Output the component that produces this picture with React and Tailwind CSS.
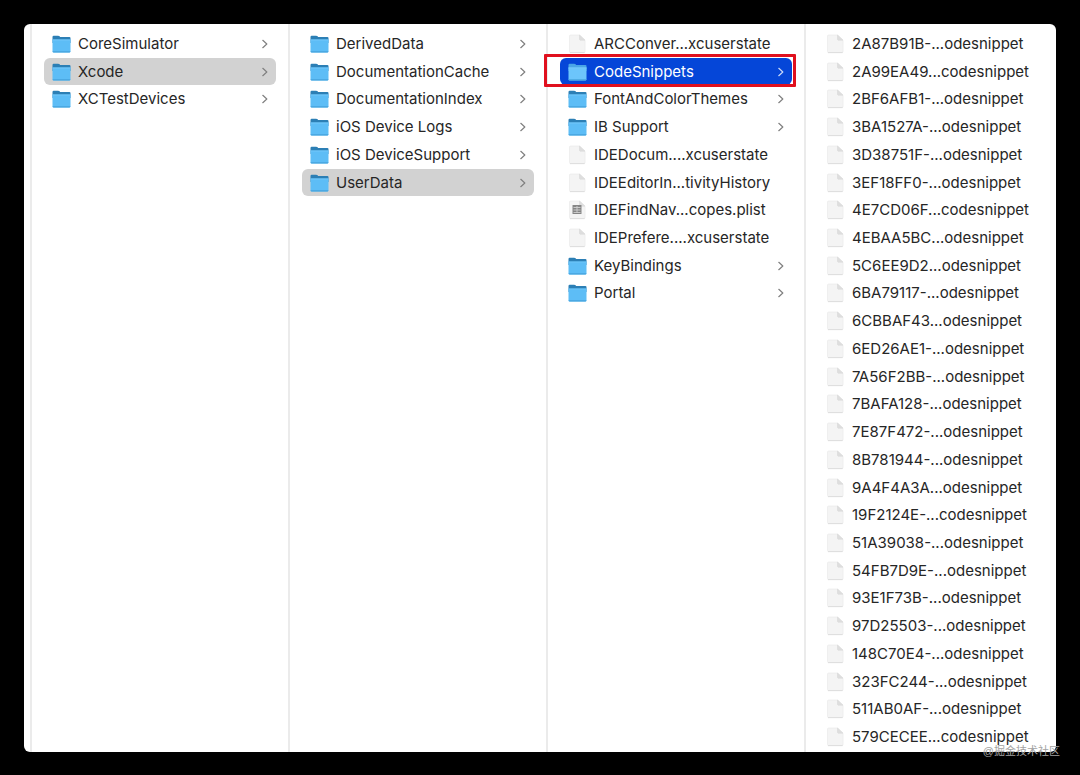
import React, { useState } from 'react';

const columns = [
  {
    name: 'Developer',
    items: [
      { name: 'CoreSimulator', type: 'folder' },
      { name: 'Xcode', type: 'folder' },
      { name: 'XCTestDevices', type: 'folder' },
    ],
  },
  {
    name: 'Xcode',
    items: [
      { name: 'DerivedData', type: 'folder' },
      { name: 'DocumentationCache', type: 'folder' },
      { name: 'DocumentationIndex', type: 'folder' },
      { name: 'iOS Device Logs', type: 'folder' },
      { name: 'iOS DeviceSupport', type: 'folder' },
      { name: 'UserData', type: 'folder' },
    ],
  },
  {
    name: 'UserData',
    items: [
      { name: 'ARCConver...xcuserstate', type: 'file' },
      { name: 'CodeSnippets', type: 'folder', marked: true },
      { name: 'FontAndColorThemes', type: 'folder' },
      { name: 'IB Support', type: 'folder' },
      { name: 'IDEDocum....xcuserstate', type: 'file' },
      { name: 'IDEEditorIn...tivityHistory', type: 'file' },
      { name: 'IDEFindNav...copes.plist', type: 'plist' },
      { name: 'IDEPrefere....xcuserstate', type: 'file' },
      { name: 'KeyBindings', type: 'folder' },
      { name: 'Portal', type: 'folder' },
    ],
  },
  {
    name: 'CodeSnippets',
    items: [
      '2A87B91B-...odesnippet',
      '2A99EA49...codesnippet',
      '2BF6AFB1-...odesnippet',
      '3BA1527A-...odesnippet',
      '3D38751F-...odesnippet',
      '3EF18FF0-...odesnippet',
      '4E7CD06F...codesnippet',
      '4EBAA5BC...odesnippet',
      '5C6EE9D2...odesnippet',
      '6BA79117-...odesnippet',
      '6CBBAF43...odesnippet',
      '6ED26AE1-...odesnippet',
      '7A56F2BB-...odesnippet',
      '7BAFA128-...odesnippet',
      '7E87F472-...odesnippet',
      '8B781944-...odesnippet',
      '9A4F4A3A...odesnippet',
      '19F2124E-...codesnippet',
      '51A39038-...odesnippet',
      '54FB7D9E-...odesnippet',
      '93E1F73B-...odesnippet',
      '97D25503-...odesnippet',
      '148C70E4-...odesnippet',
      '323FC244-...odesnippet',
      '511AB0AF-...odesnippet',
      '579CECEE...codesnippet',
    ].map((name) => ({ name, type: 'file' })),
  },
];

const FolderIcon = ({ light }) => (
  <svg viewBox="0 0 19 18" className="h-[18px] w-[19px] shrink-0" aria-hidden="true">
    <path
      d="M0.5 1.9Q0.5 0.7 1.7 0.7H6.2Q7 0.7 7.6 1.3L8.2 1.9H17.4Q18.5 1.9 18.5 3V8H0.5Z"
      fill={light ? '#4aa5e6' : '#2c7fb5'}
    />
    <path
      d="M0.5 4.6H18.5V16.2Q18.5 17.4 17.3 17.4H1.7Q0.5 17.4 0.5 16.2Z"
      fill={light ? '#6cc5fb' : '#5dbdf6'}
    />
    <path d="M0.5 4.6H18.5V5.4H0.5Z" fill="#74c8f9" />
    <path d="M0.6 16.2H18.4Q18.3 17.4 17.3 17.4H1.7Q0.7 17.4 0.6 16.2Z" fill="#46a3dc" />
  </svg>
);

const FileIcon = ({ plist }) => (
  <svg viewBox="0 0 19 20" className="h-5 w-[19px] shrink-0" aria-hidden="true">
    <path
      d="M1.5 2Q1.5 1 2.5 1H11.5L17 6.2V17.6Q17 18.6 16 18.6H2.5Q1.5 18.6 1.5 17.6Z"
      fill="#f4f4f4"
      stroke="#ececec"
      strokeWidth="0.8"
    />
    <path d="M2 18.6H16.6" stroke="#dadada" strokeWidth="0.9" />
    <path d="M11.5 1V5.2Q11.5 6.2 12.5 6.2H17Z" fill="#dedede" stroke="#d4d4d4" strokeWidth="0.5" />
    {plist && (
      <g>
        <rect x="4.5" y="5" width="9" height="9" rx="0.5" fill="#858585" />
        <path d="M5.5 7.5H12.5M5.5 10H12.5M5.5 12.5H12.5M9 6V13" stroke="#cfcfcf" strokeWidth="0.9" />
      </g>
    )}
  </svg>
);

const Chevron = ({ color }) => (
  <svg viewBox="0 0 6 10" className="ml-auto h-[10px] w-[6px] shrink-0" aria-hidden="true">
    <path
      d="M0.8 1.3L4.8 5L0.8 8.7"
      fill="none"
      stroke={color}
      strokeWidth="1.2"
      strokeLinecap="round"
      strokeLinejoin="round"
    />
  </svg>
);

const App = () => {
  // selected item of each open column
  const [path, setPath] = useState(['Xcode', 'UserData', 'CodeSnippets', null]);

  const handleSelect = (col, name) => {
    setPath((prev) => prev.map((p, i) => (i === col ? name : p)));
  };

  const rowColor = (col, name) => {
    if (path[col] !== name) return 'text-[#262626]';
    return col === 2 ? 'bg-[#0546d8] text-white' : 'bg-[#d2d2d2] text-[#262626]';
  };

  return (
    <div className="relative flex min-h-screen bg-black px-6 pt-6 pb-[23px] font-['Inter','Liberation_Sans',sans-serif]">
      <main className="grid flex-1 grid-cols-[6px_258fr_258fr_258fr_252fr] overflow-hidden rounded-md bg-white">
        <div />
        {columns.map((column, col) => (
          <ul
            key={column.name}
            aria-label={column.name}
            className="grid min-w-0 grid-rows-[repeat(26,minmax(24px,1fr))] border-l-2 border-[#ebebeb] pt-1.5 pr-3 pb-px pl-3"
          >
            {column.items.map((item) => {
              const active = path[col] === item.name && col === 2;
              return (
                <li key={item.name} className="relative flex min-w-0">
                  <button
                    type="button"
                    onClick={() => handleSelect(col, item.name)}
                    className={`flex min-w-0 flex-1 items-center gap-[7px] rounded-md px-2 text-left text-[15px] leading-5 whitespace-nowrap ${rowColor(col, item.name)}`}
                  >
                    {item.type === 'folder' ? (
                      <FolderIcon light={active} />
                    ) : (
                      <FileIcon plist={item.type === 'plist'} />
                    )}
                    <span>{item.name}</span>
                    {item.type === 'folder' && <Chevron color={active ? '#c9d8f8' : '#808080'} />}
                  </button>
                  {item.marked && (
                    <span className="pointer-events-none absolute -top-1 -right-1 -bottom-0.5 -left-4 rounded-[1px] border-3 border-[#e0101e]" />
                  )}
                </li>
              );
            })}
          </ul>
        ))}
      </main>
      <span className="absolute right-5 bottom-4 font-['Liberation_Sans','Noto_Sans_CJK_SC',sans-serif] text-[11px] leading-4 text-[#a3a3a3]">
        @掘金技术社区
      </span>
    </div>
  );
};

export default App;
